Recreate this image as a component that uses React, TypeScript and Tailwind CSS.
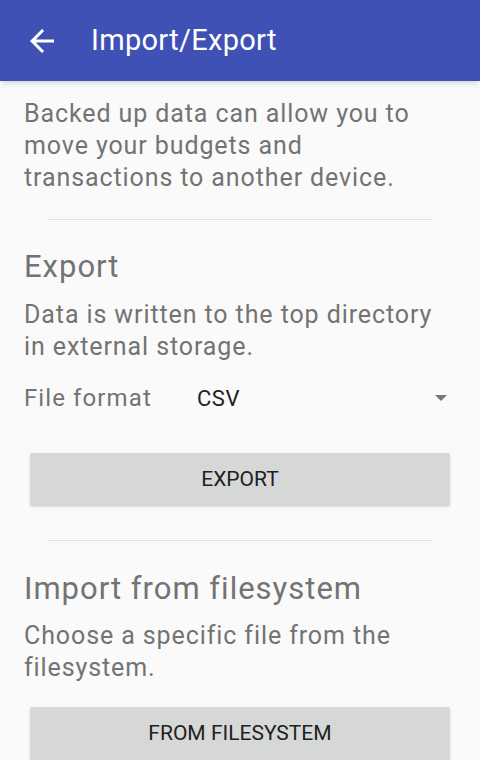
import React from 'react';

function ArrowLeft() {
  return (
    <svg width="36" height="36" viewBox="0 0 24 24" className="fill-white">
      <path d="M20 11H7.83l5.59-5.59L12 4l-8 8 8 8 1.41-1.41L7.83 13H20v-2z" />
    </svg>
  );
}

export default function App() {
  return (
    <div className="w-[480px] h-[760px] overflow-hidden bg-[#fafafa] font-['Roboto',sans-serif]">
      {/* App bar */}
      <div className="h-[81px] bg-[#3f51b5] flex items-center shadow-md">
        <div className="w-[91px] pl-[24px] flex items-center">
          <ArrowLeft />
        </div>
        <h1 className="text-white text-[29px] tracking-[0.3px]">Import/Export</h1>
      </div>

      <div className="px-6 pt-[17px] text-[#737373]">
        <p className="text-[25px] leading-[32px] tracking-[0.9px]">
          Backed up data can allow you to move your budgets and transactions to another device.
        </p>

        <div className="mx-6 mt-[25px] h-px bg-[#e0e0e0]" />

        {/* Export */}
        <h2 className="mt-[28px] text-[31px] leading-[38px] tracking-[1px]">Export</h2>
        <p className="mt-[13px] text-[25px] leading-[32px] tracking-[0.9px]">
          Data is written to the top directory in external storage.
        </p>

        <div className="mt-[17px] flex items-center h-[36px]">
          <span className="text-[24px] w-[173px] tracking-[1.1px]">File format</span>
          <span className="text-[22px] text-[#212121] flex-1 tracking-[0.5px]">CSV</span>
          <svg width="12" height="7" viewBox="0 0 12 7" className="mr-[9px] fill-[#757575]">
            <path d="M0 0h12L6 6z" />
          </svg>
        </div>

        <button className="mt-[37px] mx-1.5 w-[420px] h-[53px] rounded-[2px] bg-[#d6d7d7] text-[#212121] text-[21px] shadow-sm">
          EXPORT
        </button>

        <div className="mx-6 mt-[34px] h-px bg-[#e0e0e0]" />

        {/* Import */}
        <h2 className="mt-[29px] text-[31px] leading-[38px] tracking-[1px]">Import from filesystem</h2>
        <p className="mt-[12px] text-[25px] leading-[32px] tracking-[0.9px]">
          Choose a specific file from the filesystem.
        </p>

        <button className="mt-[23px] mx-1.5 w-[420px] h-[53px] rounded-[2px] bg-[#d6d7d7] text-[#212121] text-[21px] shadow-sm">
          FROM FILESYSTEM
        </button>
      </div>
    </div>
  );
}
